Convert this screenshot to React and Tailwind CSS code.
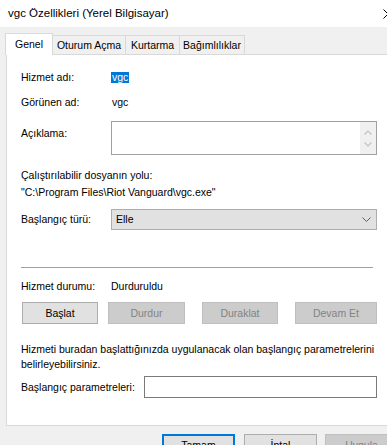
import React from "react";

function Btn({ children, w, disabled, className = "" }) {
  return (
    <div
      className={
        "h-[22px] flex items-center justify-center border " +
        (disabled
          ? "bg-[#cccccc] border-[#bfbfbf] text-[#838383] "
          : "bg-[#e1e1e1] border-[#adadad] text-black ") +
        className
      }
      style={{ width: w }}
    >
      {children}
    </div>
  );
}

export default function App() {
  return (
    <div className="w-[387px] h-[445px] overflow-hidden bg-[#f0f0f0] font-['Liberation_Sans',Arial,sans-serif] text-[10.5px] leading-[15px] text-black">
      <div className="w-[400px]">
        {/* Title bar */}
        <div className="h-[27px] bg-white flex items-center justify-between pl-[8px] pr-[7px]">
          <span className="text-[11.5px]">vgc Özellikleri (Yerel Bilgisayar)</span>
          <svg width="10" height="10" viewBox="0 0 10 10" className="mt-[1px]">
            <path d="M0.5 0.5 L9.5 9.5 M9.5 0.5 L0.5 9.5" stroke="#000" strokeWidth="1" fill="none" />
          </svg>
        </div>

        {/* Tabs */}
        <div className="relative z-10 ml-[5px] mt-[6px] h-[22px] flex items-end">
          <div className="w-[48px] h-[22px] bg-white border border-b-0 border-[#d9d9d9] flex items-center justify-center pb-[1px]">
            Genel
          </div>
          <div className="-ml-px w-[74px] h-[20px] bg-[#f0f0f0] border border-[#d9d9d9] flex items-center justify-center">
            Oturum Açma
          </div>
          <div className="-ml-px w-[55px] h-[20px] bg-[#f0f0f0] border border-[#d9d9d9] flex items-center justify-center">
            Kurtarma
          </div>
          <div className="-ml-px w-[66px] h-[20px] bg-[#f0f0f0] border border-[#d9d9d9] flex items-center justify-center">
            Bağımlılıklar
          </div>
        </div>

        {/* Panel */}
        <div className="ml-[6px] -mt-px w-[386px] h-[372px] bg-white border border-[#d9d9d9] px-[14px] flex flex-col">
          <div className="mt-[12px] h-[20px] flex items-center">
            <span className="w-[90px]">Hizmet adı:</span>
            <span className="bg-[#0078d7] text-white leading-[11px] h-[11px] px-[1px] flex items-center">vgc</span>
          </div>
          <div className="mt-[5px] h-[20px] flex items-center">
            <span className="w-[90px]">Görünen ad:</span>
            <span className="pl-[1px]">vgc</span>
          </div>
          <div className="mt-[9px] h-[34px] flex items-start">
            <span className="w-[90px] pt-[5px]">Açıklama:</span>
            <div className="w-[266px] h-[34px] border border-[#a0a0a0] bg-white flex justify-end">
              <div className="w-[16px] h-full bg-[#f0f0f0] flex flex-col items-center justify-center gap-[7px]">
                <svg width="8" height="5" viewBox="0 0 8 5">
                  <path d="M0.5 4.5 L4 1 L7.5 4.5" stroke="#c2c2c2" strokeWidth="1.2" fill="none" />
                </svg>
                <svg width="8" height="5" viewBox="0 0 8 5">
                  <path d="M0.5 0.5 L4 4 L7.5 0.5" stroke="#c2c2c2" strokeWidth="1.2" fill="none" />
                </svg>
              </div>
            </div>
          </div>
          <div className="mt-[12px] h-[16px] flex items-center">Çalıştırılabilir dosyanın yolu:</div>
          <div className="mt-[1px] h-[16px] flex items-center">{'"C:\\Program Files\\Riot Vanguard\\vgc.exe"'}</div>
          <div className="mt-[9px] h-[21px] flex items-center">
            <span className="w-[90px]">Başlangıç türü:</span>
            <div className="w-[266px] h-[21px] bg-[#e1e1e1] border border-[#adadad] flex items-center justify-between pl-[4px] pr-[5px]">
              <span>Elle</span>
              <svg width="9" height="5" viewBox="0 0 9 5">
                <path d="M0.5 0.5 L4.5 4.5 L8.5 0.5" stroke="#606060" strokeWidth="1" fill="none" />
              </svg>
            </div>
          </div>
          <div className="mt-[37px] w-[352px] h-px bg-[#a0a0a0]" />
          <div className="mt-[10px] h-[16px] flex items-center">
            <span className="w-[90px]">Hizmet durumu:</span>
            <span>Durduruldu</span>
          </div>
          <div className="mt-[8px] flex">
            <Btn w={76} className="ml-[1px]">Başlat</Btn>
            <Btn w={77} disabled className="ml-[10px]">Durdur</Btn>
            <Btn w={76} disabled className="ml-[17px]">Duraklat</Btn>
            <Btn w={82} disabled className="ml-[17px]">Devam Et</Btn>
          </div>
          <div className="mt-[18px]">
            Hizmeti buradan başlattığınızda uygulanacak olan başlangıç parametrelerini
            <br />
            belirleyebilirsiniz.
          </div>
          <div className="mt-[4px] h-[22px] flex items-center">
            <span className="w-[123px]">Başlangıç parametreleri:</span>
            <div className="w-[233px] h-[22px] border border-[#7a7a7a] bg-white" />
          </div>
        </div>

        {/* Bottom buttons */}
        <div className="mt-[8px] flex pl-[162px]">
          <div className="w-[73px] h-[23px] border-2 border-[#0078d7] bg-[#e1e1e1] flex items-center justify-center">Tamam</div>
          <div className="ml-[9px] w-[73px] h-[23px] border border-[#adadad] bg-[#e1e1e1] flex items-center justify-center">İptal</div>
          <div className="ml-[8px] w-[73px] h-[23px] border border-[#bfbfbf] bg-[#cccccc] text-[#838383] flex items-center justify-center">Uygula</div>
        </div>
      </div>
    </div>
  );
}
